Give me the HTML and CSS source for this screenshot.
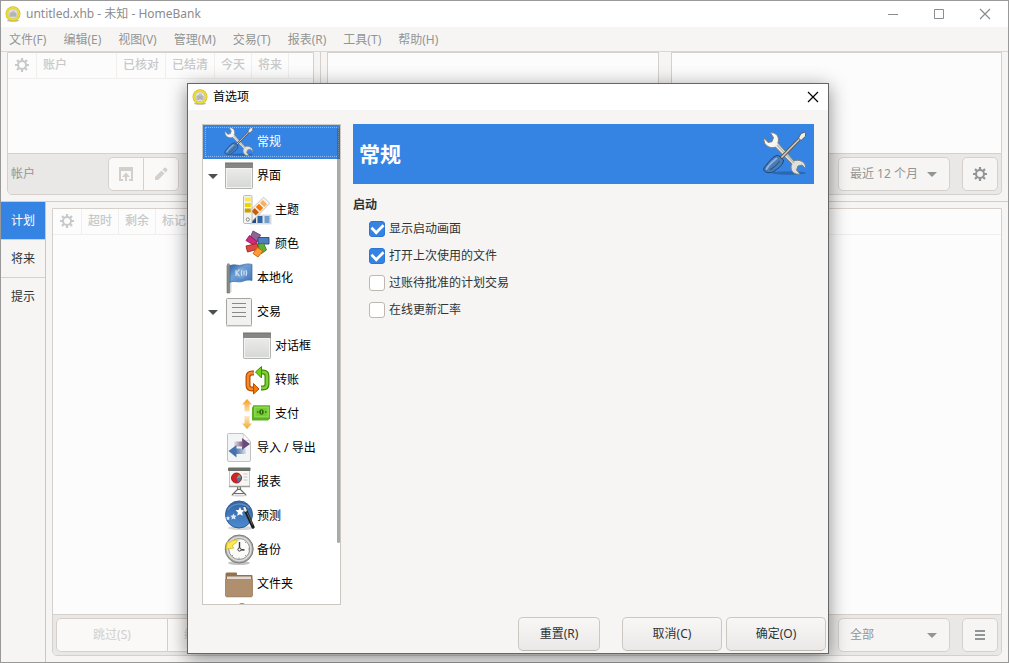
FILE: index.html
```html
<!doctype html>
<html lang="zh-CN">

<head>
  <meta charset="utf-8">
  <title>untitled.xhb - 未知 - HomeBank</title>
  <link rel="stylesheet" href="styles.css">
</head>

<body>
  <!-- icons -->
  <svg class="defs" aria-hidden="true">
    <defs>
      <linearGradient id="g-steel" x1="0" y1="0" x2="1" y2="1">
        <stop offset="0" stop-color="#ffffff"/><stop offset="1" stop-color="#d6d8d4"/>
      </linearGradient>
      <linearGradient id="g-page" x1="0" y1="0" x2="0" y2="1">
        <stop offset="0" stop-color="#f0f0ee"/><stop offset="1" stop-color="#d6d8d4"/>
      </linearGradient>
      <linearGradient id="g-blue" x1="0" y1="0" x2="0" y2="1">
        <stop offset="0" stop-color="#3465a4"/><stop offset="1" stop-color="#4c8ad0"/>
      </linearGradient>
      <linearGradient id="g-flag" x1="0" y1="0" x2="1" y2="1">
        <stop offset="0" stop-color="#2f62a0"/><stop offset=".4" stop-color="#6f9fd6"/><stop offset="1" stop-color="#3f76b8"/>
      </linearGradient>
      <linearGradient id="g-gold" x1="0" y1="0" x2="0" y2="1">
        <stop offset="0" stop-color="#f59c1c"/><stop offset="1" stop-color="#fbe0b0"/>
      </linearGradient>
      <linearGradient id="g-gold2" x1="0" y1="0" x2="0" y2="1">
        <stop offset="0" stop-color="#fbe9c8"/><stop offset="1" stop-color="#f0a828"/>
      </linearGradient>
      <linearGradient id="g-purple" x1="0" y1="0" x2="1" y2="0">
        <stop offset="0" stop-color="#75507b" stop-opacity=".1"/><stop offset=".6" stop-color="#6a4a78"/>
      </linearGradient>
      <linearGradient id="g-back" x1="1" y1="0" x2="0" y2="0">
        <stop offset="0" stop-color="#3465a4" stop-opacity=".1"/><stop offset=".6" stop-color="#4472ac"/>
      </linearGradient>
    </defs>

    <symbol id="i-app" viewBox="0 0 16 16">
      <ellipse cx="8" cy="14.5" rx="6" ry="1.3" fill="#bbb"/>
      <circle cx="8" cy="7.7" r="7.5" fill="#d5bd1c"/>
      <circle cx="8" cy="7.7" r="6.8" fill="#f0df35"/>
      <circle cx="8" cy="7.7" r="5" fill="#e0e1e4" stroke="#c9b84a" stroke-width=".5"/>
      <path d="M4.500 7 8 5.200 11.500 7v3.800h-7z" fill="#b3b5b3"/>
      <path d="M7 4.500h3v2H7z" fill="#c6c8c6"/>
    </symbol>

    <symbol id="i-tools" viewBox="0 0 48 48">
      <ellipse cx="28" cy="43" rx="17" ry="1.800" fill="#1c3f6c" opacity=".4"/>
      <path d="M9.500 3c4-1 8 2 8 7 0 1-.2 2-.7 3L33 31c2-1 5-1 7 0 3 1 5 4 4.500 7.500l-3.500-3.500-4 1-1.500 4 3.500 4c-5 1-9-2-9-7 0-1 .3-2 1-3L14.500 17c-2 1-5 1-7.500-.5C4 15 2.500 12 3 8l4 4.500 4-.8 1.500-4.200z" fill="url(#g-steel)" stroke="#7d807b" stroke-linejoin="round"/>
      <path d="M16 15 33 33" stroke="#b8bbb6" stroke-width="1.600"/>
      <path d="M20 28 39 8.500" stroke="#5b5d59" stroke-width="3.300"/>
      <path d="M20 28 39 8.500" stroke="#d3d0ca" stroke-width="1.400"/>
      <path d="m37.500 8 2.500-4.500 3.500-1.200 1 1v3L40 10.500z" fill="#eeeeec" stroke="#555753" stroke-width=".9"/>
      <path d="M17.500 25.500 22.500 30c0 4-4 7.500-8.500 10.500-2.500 2-4.500 2.500-7 2-3-.5-5-1.500-4-4.500 2-3 6-7.500 8.500-10 2-1.800 4-2.500 6-2.500z" fill="#4a7cb8" stroke="#1d4373"/>
      <path d="M15.500 28.500C11 32 7.500 35.500 5.500 39" stroke="#8fb4de" stroke-width="1.800" fill="none" stroke-linecap="round"/>
      <path d="M19 31c-3 4-6 6-10 9" stroke="#2b568d" stroke-width="1.200" fill="none"/>
    </symbol>

    <symbol id="i-window" viewBox="0 0 32 32">
      <rect x="2.500" y="3.500" width="27" height="25" rx="1" fill="url(#g-page)" stroke="#b2b4af"/>
      <path d="M2 3h28v5H2z" fill="#858783"/>
      <path d="M2 2.500h28v1H2z" fill="#6e706c"/>
      <path d="M3.500 8.500h25v19h-25z" fill="none" stroke="#f3f4f2"/>
    </symbol>

    <symbol id="i-theme" viewBox="0 0 32 32">
      <g>
        <rect x="9" y="21" width="21" height="9" fill="#e4e6e8" stroke="#c2c4c2" stroke-width=".6"/>
        <path d="M11 22h4v7h-4z" fill="#1f4a87"/><path d="M16.500 22h5v7h-5z" fill="#3465a4"/><path d="M23.500 22h5v7h-5z" fill="#729fcf"/>
      </g>
      <g transform="rotate(45 7 25)">
        <rect x="2.500" y="-1.500" width="9" height="28" rx="1" fill="#f2f2f1" stroke="#b5b5b2" stroke-width=".7"/>
        <path d="M4 1h6v4H4z" fill="#fcaf5e"/><path d="M4 6.500h6v4.500H4z" fill="#f57900"/><path d="M4 12.500h6v4.500H4z" fill="#ce5c00"/>
      </g>
      <rect x="2.500" y="1.500" width="8.500" height="28" rx="1.200" fill="#f4f4f3" stroke="#aaaba8" stroke-width=".8"/>
      <path d="M3.800 3.500h6v4h-6z" fill="#fbe74a"/><path d="M3.800 9h6v4h-6z" fill="#edd400"/><path d="M3.800 14.500h6v4h-6z" fill="#c4a000"/>
      <circle cx="6.800" cy="25.500" r="1.600" fill="#fff" stroke="#777" stroke-width=".9"/>
    </symbol>

    <symbol id="i-color" viewBox="0 0 32 32">
      <path d="m12 3 7.500 4-3.500 7-7-4z" fill="#8f6496" stroke="#68406f" stroke-width=".9"/>
      <path d="M17 9.500h11V16H17z" fill="#4f80bd" stroke="#204a87" stroke-width=".9"/>
      <path d="m16.500 16.500 6-1.500 3 7-5 3.500z" fill="#5cb03a" stroke="#3c7a1c" stroke-width=".9"/>
      <path d="M5 12.500 8.500 7.500l7.500 6-2.500 4z" fill="#d02a80" stroke="#91145a" stroke-width=".9"/>
      <path d="m5 18 11-2.500 1.500 5.500-11 3z" fill="#dc4a44" stroke="#a0221c" stroke-width=".9"/>
      <path d="m16.500 19.500 5.500 3.500-5 6-5-3.500z" fill="#fb9a36" stroke="#cc6200" stroke-width=".9"/>
    </symbol>

    <symbol id="i-flag" viewBox="0 0 32 32">
      <path d="M8 21v9" stroke="#d4d6d4"/>
      <path d="M4 3h2.800v28H4z" fill="#888a85" stroke="#6c6e6a" stroke-width=".6"/>
      <circle cx="5.400" cy="2.800" r="1.500" fill="#8f918e"/>
      <path d="M7 3.500c5-2 8 1 12-.5 4-1.200 7-1.500 10-.5v16c-4-1-7 0-10 1-4 1.300-8-1.500-12 1z" fill="url(#g-flag)" stroke="#3a6aa4" stroke-width=".7"/>
      <circle cx="18" cy="11" r="5.500" fill="#8fb4de" opacity=".45"/>
      <path d="M13 8v6M16.500 7.500l-3 3.500 3 3M19 8c-1 2-1 4 0 6M23 8c1 2 1 4 0 6M21 9v4" fill="none" stroke="#d3e3f5" stroke-width="1.100"/>
    </symbol>

    <symbol id="i-doc" viewBox="0 0 32 32">
      <rect x="3.500" y="2.500" width="25" height="27" rx="1" fill="#f1f2f0" stroke="#a3a5a0"/>
      <path d="M3 30h26" stroke="#c4c6c2"/>
      <path d="M9 7.500h14M9 11.500h14M9 16.500h14M9 20.500h14" stroke="#888a85"/>
    </symbol>

    <symbol id="i-transfer" viewBox="0 0 32 32">
      <g fill="none" stroke-linejoin="round">
        <path d="M13 9h-2q-4 0-4 4v8q0 4 4 4h2" stroke="#b84e00" stroke-width="5"/>
        <path d="M13 9h-2q-4 0-4 4v8q0 4 4 4h2" stroke="#f28a2c" stroke-width="2.600"/>
        <path d="M12.500 19.500 18 25l-5.500 5z" fill="#f57900" stroke="#b84e00"/>
        <path d="M20 8h2q4 0 4 4v8q0 4-4 4h-2" stroke="#3d8a02" stroke-width="5"/>
        <path d="M20 8h2q4 0 4 4v8q0 4-4 4h-2" stroke="#7cd035" stroke-width="2.600"/>
        <path d="M20.500 2.500V14L14.500 8z" fill="#73d216" stroke="#3d8a02"/>
      </g>
    </symbol>

    <symbol id="i-pay" viewBox="0 0 32 32">
      <path d="m6 1 5 5.500H8.500v7h-5v-7H1z" fill="url(#g-gold)"/>
      <path d="M3.500 18h5v7.500H11L6 31l-5-5.500h2.500z" fill="url(#g-gold2)"/>
      <path d="M11 9.500 12.500 7.500H29v13L27 22.500H11z" fill="#5fae2a"/>
      <rect x="12.500" y="8" width="16" height="12" fill="#8ad94a" stroke="#5caf1c"/>
      <path d="M14.500 10h12v8h-12z" fill="#79cc38"/>
      <ellipse cx="20.500" cy="14" rx="2.300" ry="2.700" fill="#2f6e0c"/>
      <path d="M16 14h1.500M24 14h1.500" stroke="#2f6e0c" stroke-width="1.600"/>
      <path d="M20.500 12.500v3" stroke="#8ae234" stroke-width=".8"/>
    </symbol>

    <symbol id="i-io" viewBox="0 0 32 32">
      <path d="M4.500 2.500q0-1 1-1H20l7.500 8V28q0 1.500-1.500 1.500H6q-1.500 0-1.500-1.500z" fill="#f3f4f5" stroke="#c0c2c1"/>
      <path d="M20 1.500c1 3 .5 5-.5 7 3-.5 6-.5 8 1z" fill="#fff" stroke="#c3c5c4" stroke-width=".7"/>
      <path d="M11 9.500h8V6l8 6-8 6v-3.500h-8z" fill="url(#g-purple)"/>
      <path d="M23 16.500h-9.500V13L5.500 19l8 6.500V22H23z" fill="url(#g-back)"/>
    </symbol>

    <symbol id="i-report" viewBox="0 0 32 32">
      <path d="m16 22-7 7M16 22l7 7M10 27.500h12" stroke="#6c6e6a" stroke-width="1.200"/>
      <ellipse cx="16" cy="29.500" rx="8" ry="1" fill="#aaa" opacity=".5"/>
      <circle cx="16" cy="22" r="1.500" fill="#fff" stroke="#555"/>
      <rect x="6.500" y="4.500" width="20" height="16" fill="#f7f7f6" stroke="#c4c5c2"/>
      <rect x="5" y="1.500" width="22.500" height="3.500" rx=".8" fill="#6c6e6a"/>
      <path d="M6 20.500h21" stroke="#9a9c98" stroke-width="1.500"/>
      <circle cx="13.500" cy="12" r="5" fill="#d81f26" stroke="#8c1418" stroke-width=".9"/>
      <path d="M13.500 12h4.500a4.500 4.500 0 0 1-3 4.200z" fill="#4a78b4"/>
      <path d="M13.500 12h4.500a4.500 4.500 0 0 0-2-3.700z" fill="#7ca860"/>
      <path d="M20.500 8h4M20.500 11h4M20.500 14h4" stroke="#c6c7c4"/>
    </symbol>

    <symbol id="i-wand" viewBox="0 0 32 32">
      <ellipse cx="18" cy="28" rx="13" ry="2" fill="#999" opacity=".4"/>
      <circle cx="16" cy="14.500" r="13.500" fill="url(#g-blue)" stroke="#2c5a98"/>
      <path d="M5 10C9 3 20 2 26 8" stroke="#6f9bd0" stroke-width="1.500" fill="none" opacity=".7"/>
      <path d="m17 7 1.300 3 3.200.3-2.400 2.300.7 3.200-2.800-1.600-2.800 1.600.7-3.200-2.400-2.300 3.200-.3z" fill="#fff"/>
      <path d="m10.500 13.500 1 2 2.200.2-1.600 1.600.4 2.200-2-1.100-2 1.100.4-2.200-1.600-1.600 2.200-.2zM5 16l.7 1.300 1.600.2-1.200 1.100.2 1.600L5 19.500l-1.300.7.200-1.600-1.200-1.100 1.600-.2z" fill="#dfeafa"/>
      <path d="m21.500 8 8.500 19" stroke="#1c1d1c" stroke-width="3.200" stroke-linecap="round"/>
      <path d="m21.500 8 1 2.500" stroke="#eeeeec" stroke-width="2.600" stroke-linecap="round"/>
      <path d="m24 12.500 5.500 12" stroke="#777" stroke-width=".8"/>
    </symbol>

    <symbol id="i-clock" viewBox="0 0 32 32">
      <ellipse cx="16" cy="29" rx="11" ry="2" fill="#888" opacity=".5"/>
      <circle cx="16.200" cy="15" r="14" fill="#a6a8a3" stroke="#7c7e7a"/>
      <circle cx="16.200" cy="15" r="12.500" fill="#dcdddb"/>
      <circle cx="16.200" cy="15" r="10.500" fill="#fbfbfa" stroke="#8f918d"/>
      <path d="M16.500 8v7.500l5 .5" stroke="#3b3d3a" stroke-width="1.400" fill="none"/>
      <circle cx="16.500" cy="15.500" r="1.600" fill="#fff" stroke="#3b3d3a"/>
      <path d="M16 5.500v1M16 23.500v1.500M25 15h1.500M22 9l1-1M22 21l1 1M9 22l1-1" stroke="#9a9c98"/>
      <path d="M14.500 6C10.500 5.500 8 7 6.500 8.800L4.500 7.500 3 15l8-1-2-2c1.500-1.500 2.500-2.500 4-3z" fill="#fce94f" stroke="#d4b41c" stroke-width=".7"/>
    </symbol>

    <symbol id="i-folder" viewBox="0 0 32 32">
      <path d="M2.500 28V6q0-1.500 1.500-1.500h9q1 0 1 1V7h14.500q1 0 1 1v20z" fill="#93704f"/>
      <path d="M4 8.500h24v4H4z" fill="#dedbd6"/>
      <path d="M2.500 11.500H29.500v16q0 1-1 1h-25q-1 0-1-1z" fill="#b08f6e" stroke="#a58363" stroke-width=".8"/>
      <path d="M3 29h26" stroke="#6e553f" stroke-width=".7" opacity=".5"/>
    </symbol>

    <symbol id="i-bag" viewBox="0 0 32 32">
      <circle cx="19" cy="6" r="5" fill="#b5844a"/>
    </symbol>

    <symbol id="i-gear" viewBox="0 0 14 14">
      <circle cx="7" cy="7" r="4" fill="none" stroke="currentColor" stroke-width="2"/>
      <path d="M7 0v3M7 11v3M0 7h3M11 7h3M2 2l2.200 2.200M9.800 9.800 12 12M12 2 9.800 4.200M4.200 9.800 2 12" stroke="currentColor" stroke-width="2.200"/>
    </symbol>

    <symbol id="i-open" viewBox="0 0 16 16">
      <path d="M1 1h14v14h-4v-2h2V5H3v8h2v2H1z" fill="currentColor"/>
      <path d="M8 6.500 12 11H9v4H7v-4H4z" fill="currentColor"/>
    </symbol>

    <symbol id="i-pencil" viewBox="0 0 16 16">
      <path d="M2 14v-3l6.500-6.500 3 3L5 14zM9.500 3.500 11 2q1-1 2 0l1 1q1 1 0 2l-1.500 1.500z" fill="currentColor"/>
    </symbol>

    <symbol id="i-menu" viewBox="0 0 12 12">
      <path d="M1 2h10M1 6h10M1 10h10" stroke="currentColor" stroke-width="2"/>
    </symbol>

    <symbol id="i-min" viewBox="0 0 12 12"><path d="M1 6.500h10" stroke="currentColor"/></symbol>
    <symbol id="i-max" viewBox="0 0 12 12"><path d="M1.500 1.500h9v9h-9z" fill="none" stroke="currentColor"/></symbol>
    <symbol id="i-close" viewBox="0 0 12 12"><path d="m1 1 10 10M11 1 1 11" stroke="currentColor" stroke-width="1.200"/></symbol>
  </svg>

  <div class="app">
    <header class="titlebar">
      <svg class="app-icon"><use href="#i-app"/></svg>
      <h1 class="title">untitled.xhb - 未知 - HomeBank</h1>
      <button class="winbtn" aria-label="最小化"><svg><use href="#i-min"/></svg></button>
      <button class="winbtn" aria-label="最大化"><svg><use href="#i-max"/></svg></button>
      <button class="winbtn" aria-label="关闭"><svg><use href="#i-close"/></svg></button>
    </header>

    <nav class="menubar">
      <button>文件(F)</button>
      <button>编辑(E)</button>
      <button>视图(V)</button>
      <button>管理(M)</button>
      <button>交易(T)</button>
      <button>报表(R)</button>
      <button>工具(T)</button>
      <button>帮助(H)</button>
    </nav>

    <div class="top">
      <section class="panel accounts">
        <div class="view">
          <table class="cols">
            <tr>
              <th><svg class="gear"><use href="#i-gear"/></svg></th>
              <th class="wide">账户</th>
              <th>已核对</th>
              <th>已结清</th>
              <th>今天</th>
              <th>将来</th>
              <th class="rest"></th>
            </tr>
          </table>
        </div>
        <div class="toolbar">
          <span class="toolbar-label">帐户</span>
          <div class="linked">
            <button class="btn icon-btn off" aria-label="打开"><svg class="ico16"><use href="#i-open"/></svg></button>
            <button class="btn icon-btn off" aria-label="编辑"><svg class="ico16"><use href="#i-pencil"/></svg></button>
          </div>
        </div>
      </section>

      <section class="reports">
        <div class="charts">
          <div class="chart"></div>
          <div class="chart"></div>
        </div>
        <div class="toolbar framed">
          <div class="combo">
            <select aria-label="期间"><option>最近 12 个月</option></select>
          </div>
          <button class="btn icon-btn" aria-label="选项"><svg class="gear"><use href="#i-gear"/></svg></button>
        </div>
      </section>
    </div>

    <div class="bottom">
      <div class="tabs" role="tablist">
        <button class="tab active" role="tab" aria-selected="true">计划</button>
        <button class="tab" role="tab">将来</button>
        <button class="tab" role="tab">提示</button>
      </div>
      <section class="panel schedule">
        <div class="view">
          <table class="cols">
            <tr>
              <th><svg class="gear"><use href="#i-gear"/></svg></th>
              <th>超时</th>
              <th>剩余</th>
              <th>标记</th>
              <th class="rest"></th>
            </tr>
          </table>
        </div>
        <div class="toolbar">
          <div class="linked">
            <button class="btn text-btn off">跳过(S)</button>
            <button class="btn text-btn off left">编辑并入账(E)</button>
          </div>
          <div class="combo">
            <select aria-label="筛选"><option>全部</option></select>
          </div>
          <button class="btn icon-btn" aria-label="菜单"><svg class="ico12"><use href="#i-menu"/></svg></button>
        </div>
      </section>
    </div>
  </div>

  <div class="dialog" role="dialog" aria-labelledby="dlg-title">
    <header class="titlebar">
      <svg class="app-icon"><use href="#i-app"/></svg>
      <h2 class="title" id="dlg-title">首选项</h2>
      <button class="winbtn" aria-label="关闭"><svg><use href="#i-close"/></svg></button>
    </header>

    <div class="dialog-body">
      <div class="tree-box">
        <ul class="tree">
          <li class="selected"><svg><use href="#i-tools"/></svg>常规</li>
          <li class="parent"><svg><use href="#i-window"/></svg>界面</li>
          <li class="child"><svg><use href="#i-theme"/></svg>主题</li>
          <li class="child"><svg><use href="#i-color"/></svg>颜色</li>
          <li><svg><use href="#i-flag"/></svg>本地化</li>
          <li class="parent"><svg><use href="#i-doc"/></svg>交易</li>
          <li class="child"><svg><use href="#i-window"/></svg>对话框</li>
          <li class="child"><svg><use href="#i-transfer"/></svg>转账</li>
          <li class="child"><svg><use href="#i-pay"/></svg>支付</li>
          <li><svg><use href="#i-io"/></svg>导入 / 导出</li>
          <li><svg><use href="#i-report"/></svg>报表</li>
          <li><svg><use href="#i-wand"/></svg>预测</li>
          <li><svg><use href="#i-clock"/></svg>备份</li>
          <li><svg><use href="#i-folder"/></svg>文件夹</li>
          <li><svg><use href="#i-bag"/></svg></li>
        </ul>
        <div class="scrollbar"></div>
      </div>

      <div class="page">
        <div class="banner">
          <h2>常规</h2>
          <svg><use href="#i-tools"/></svg>
        </div>
        <h3>启动</h3>
        <label class="check"><input type="checkbox" checked>显示启动画面</label>
        <label class="check"><input type="checkbox" checked>打开上次使用的文件</label>
        <label class="check"><input type="checkbox">过账待批准的计划交易</label>
        <label class="check"><input type="checkbox">在线更新汇率</label>
      </div>
    </div>

    <footer class="actions">
      <button class="action reset">重置(R)</button>
      <button class="action">取消(C)</button>
      <button class="action">确定(O)</button>
    </footer>
  </div>
</body>

</html>
```

FILE: styles.css
```css
* {
  box-sizing: border-box;
  margin: 0;
  padding: 0;
}
body {
  font: 12px/16px "Noto Sans", "Noto Sans CJK SC", sans-serif;
  color: #2e3436;
  background: #f6f5f4;
}
button,
select,
input {
  font: inherit;
  color: inherit;
}
ul {
  list-style: none;
}
svg {
  display: block;
  flex: none;
}
.defs {
  position: absolute;
  width: 0;
  height: 0;
}
.ico16 {
  width: 16px;
  height: 16px;
}
.ico12 {
  width: 12px;
  height: 12px;
}
.gear {
  width: 14px;
  height: 14px;
}

/* main window */
.app {
  display: flex;
  flex-direction: column;
  height: 100vh;
  border: 1px solid #999;
  color: #929595;
  overflow: hidden;
}
.titlebar {
  display: flex;
  align-items: center;
  height: 26px;
  flex: none;
  padding-left: 4px;
  background: #fff;
}
.app-icon {
  width: 16px;
  height: 16px;
  margin-right: 5px;
}
.title {
  flex: 1;
  font-size: 12px;
  font-weight: normal;
  color: #8c8c8c;
}
.winbtn {
  display: flex;
  align-items: center;
  justify-content: center;
  width: 46px;
  height: 26px;
  border: 0;
  background: none;
  color: #8c8c8c;
}
.winbtn svg {
  width: 12px;
  height: 12px;
}
.menubar {
  display: flex;
  gap: 1px;
  height: 25px;
  flex: none;
  padding-top: 2px;
  border-bottom: 1px solid #dad6d2;
}
.menubar button {
  padding: 0 8px;
  border: 0;
  background: none;
}

/* panels */
.top {
  display: flex;
  height: 150px;
  flex: none;
  border-bottom: 1px solid #d0cdca;
}
.panel {
  display: flex;
  flex-direction: column;
  border: 1px solid #d5d0cc;
  border-radius: 0 0 5px 5px;
  overflow: hidden;
}
.accounts {
  width: 307px;
  margin: 0 6px 6px;
}
.view {
  flex: 1;
  background: #fcfcfc;
}
.cols {
  width: 100%;
  border-collapse: collapse;
}
.cols th {
  height: 25px;
  padding: 0 6px;
  border-right: 1px solid #f0efee;
  border-bottom: 1px solid #f0efee;
  font-weight: 500;
  text-align: left;
  white-space: nowrap;
  color: #c8c9c9;
}
.cols th .gear {
  margin: 0 1px;
}
.cols .wide {
  min-width: 80px;
}
.cols .rest {
  width: 100%;
  padding: 0;
  border-right: 0;
}
.toolbar {
  display: flex;
  align-items: center;
  justify-content: flex-end;
  gap: 12px;
  height: 41px;
  flex: none;
  padding: 0 3px;
  border-top: 1px solid #d5d0cc;
  background: #e9e8e6;
}
.toolbar-label {
  width: 85px;
}
.accounts .toolbar {
  justify-content: flex-start;
}
.linked {
  display: flex;
  margin-right: auto;
}
.linked .btn + .btn {
  margin-left: -1px;
  border-radius: 0 5px 5px 0;
}
.linked .btn:first-child {
  border-radius: 5px 0 0 5px;
}
.btn {
  display: flex;
  align-items: center;
  justify-content: center;
  height: 34px;
  border: 1px solid #d5d0cc;
  border-radius: 5px;
  background: #f6f5f4;
  color: #929595;
}
.icon-btn {
  width: 36px;
}
.text-btn {
  width: 112px;
}
.btn.off {
  background: #faf9f8;
  color: #d4cfca;
}
.btn.left {
  padding: 0 16px;
  width: auto;
}
.combo {
  position: relative;
  width: 112px;
}
.combo select {
  width: 100%;
  height: 34px;
  padding: 0 11px;
  border: 1px solid #d5d0cc;
  border-radius: 5px;
  background: #f6f5f4;
  appearance: none;
}
.combo::after {
  content: "";
  position: absolute;
  top: 15px;
  right: 13px;
  border: 5px solid transparent;
  border-top-color: #929595;
  border-bottom: 0;
  pointer-events: none;
}
.reports {
  display: flex;
  flex-direction: column;
  flex: 1;
  padding: 0 6px 6px;
  border-left: 1px solid #d5d0cc;
}
.charts {
  display: flex;
  flex: 1;
  gap: 12px;
}
.chart {
  flex: 1;
  border: 1px solid #d5d0cc;
  border-bottom: 0;
  background: #fcfcfc;
}
.toolbar.framed {
  height: 42px;
  border: 1px solid #d5d0cc;
  border-radius: 0 0 5px 5px;
}

/* bottom notebook */
.bottom {
  display: flex;
  flex: 1;
}
.tabs {
  width: 45px;
  border-right: 1px solid #ccc7c2;
}
.tab {
  display: block;
  width: 100%;
  height: 38px;
  border: 0;
  border-bottom: 1px solid #d5d0cc;
  background: none;
  color: #2e3436;
}
.tab:last-child {
  border-bottom: 0;
}
.tab.active {
  background: #3584e4;
  color: #fff;
}
.schedule {
  flex: 1;
  margin: 6px;
}

/* preferences dialog */
.dialog {
  position: absolute;
  top: 83px;
  left: 187px;
  width: 642px;
  border: 1px solid #666;
  background: #f6f5f4;
  box-shadow: 0 4px 18px rgba(0, 0, 0, .45);
}
.dialog .title {
  color: #000;
}
.dialog .winbtn {
  width: 30px;
  color: #000;
}
.dialog-body {
  display: flex;
  gap: 12px;
  padding: 14px 14px 12px;
}
.tree-box {
  position: relative;
  width: 139px;
  height: 481px;
  border: 1px solid #cdc7c2;
  background: #fff;
  color: #000;
  overflow: hidden;
}
.tree li {
  position: relative;
  display: flex;
  align-items: center;
  gap: 2px;
  height: 34px;
  padding-left: 20px;
}
.tree li svg {
  width: 32px;
  height: 32px;
}
.tree .child {
  padding-left: 38px;
}
.tree .selected {
  background: #3584e4;
  color: #fff;
}
.tree .selected::after {
  content: "";
  position: absolute;
  inset: 2px 1px 2px 2px;
  border: 1px dotted #8fbcf2;
}
.tree .parent::before {
  content: "";
  position: absolute;
  left: 5px;
  border: 5px solid transparent;
  border-top-color: #4a4f50;
  border-bottom: 0;
}
.scrollbar {
  position: absolute;
  top: 2px;
  right: 0;
  width: 3px;
  height: 416px;
  border-radius: 2px;
  background: rgba(70, 80, 80, .48);
}
.page {
  flex: 1;
}
.banner {
  display: flex;
  align-items: center;
  justify-content: space-between;
  height: 60px;
  padding: 0 5px 0 6px;
  background: #3584e4;
  color: #fff;
}
.banner h2 {
  font-size: 21px;
  line-height: 28px;
}
.banner svg {
  width: 48px;
  height: 48px;
}
.page h3 {
  margin: 13px 0 2px;
  font-size: 12px;
}
.check {
  display: flex;
  align-items: center;
  gap: 4px;
  height: 27px;
  padding-left: 16px;
}
.check input {
  width: 16px;
  height: 16px;
  border: 1px solid #bfb8b1;
  border-radius: 3px;
  background: #fff;
  appearance: none;
}
.check input:checked {
  display: grid;
  place-items: center;
  border-color: #2b76d4;
  background: #3584e4;
}
.check input:checked::before {
  content: "";
  width: 10px;
  height: 6px;
  border: solid #fff;
  border-width: 0 0 3px 3px;
  transform: translateY(-1px) rotate(-45deg) scale(.9);
}
.actions {
  display: flex;
  justify-content: flex-end;
  gap: 4px;
  padding: 0 2px 2px;
}
.action {
  width: 100px;
  height: 34px;
  border: 1px solid #cdc7c2;
  border-bottom-color: #bfb8b1;
  border-radius: 5px;
  background: linear-gradient(#f8f7f6, #ebe9e7);
}
.action.reset {
  width: 82px;
  margin-right: 18px;
}
```
